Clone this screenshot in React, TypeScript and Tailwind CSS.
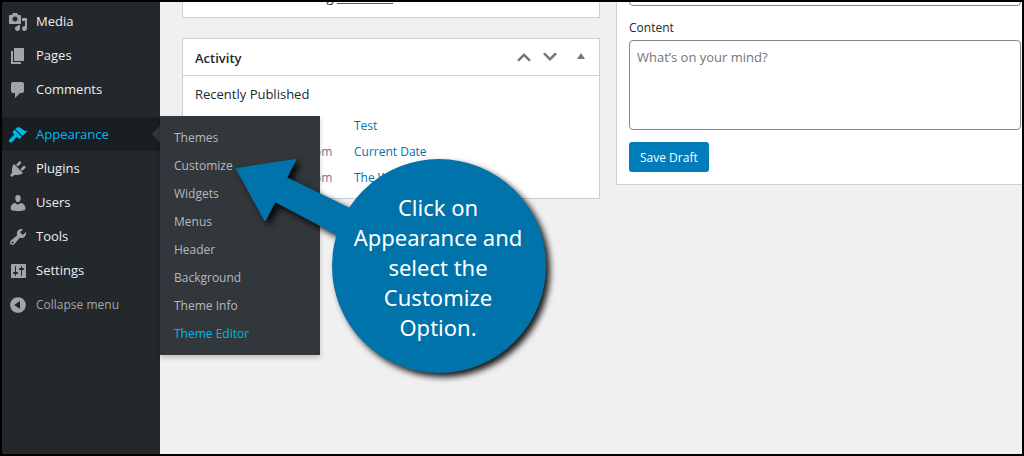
// WordPress dashboard with the Appearance flyout open and a tutorial callout

import { useState } from 'react';

interface MenuItem {
  label: string;
  icon: string;
  submenu?: string[];
}

const icons = {
  media: 'M13 11V4c0-.55-.45-1-1-1h-1.67L9 1H5L3.67 3H2c-.55 0-1 .45-1 1v7c0 .55.45 1 1 1h10c.55 0 1-.45 1-1zM7 4.5c1.38 0 2.5 1.12 2.5 2.5S8.38 9.5 7 9.5 4.5 8.38 4.5 7 5.62 4.5 7 4.5zM14 6h5v10.5c0 1.38-1.12 2.5-2.5 2.5S14 17.88 14 16.5s1.12-2.5 2.5-2.5c.17 0 .34.02.5.05V9h-3V6zm-4 8.05V13h2v3.5c0 1.38-1.12 2.5-2.5 2.5S7 17.88 7 16.5 8.12 14 9.5 14c.17 0 .34.02.5.05z',
  pages: 'M6 15V2h10v13H6zm-1 1h8v2H3V5h2v11z',
  comments: 'M5 2h9c1.1 0 2 .9 2 2v7c0 1.1-.9 2-2 2h-2l-5 5v-5H5c-1.1 0-2-.9-2-2V4c0-1.1.9-2 2-2z',
  appearance: 'M14.48 11.06L7.41 3.99l1.5-1.5c.5-.56 2.3-.47 3.51.32 1.21.8 1.43 1.28 2.91 2.1 1.18.64 2.45 1.26 4.45.85zm-.71.71L6.7 4.7 4.93 6.47c-.39.39-.39 1.02 0 1.41l1.06 1.06c.39.39.39 1.03 0 1.42-.6.6-1.43 1.11-2.21 1.69-.35.26-.7.53-1.01.84C1.43 14.23.4 16.08 1.4 17.07c.99 1 2.84-.03 4.18-1.36.31-.31.58-.66.85-1.02.57-.78 1.08-1.61 1.69-2.21.39-.39 1.02-.39 1.41 0l1.06 1.06c.39.39 1.02.39 1.41 0z',
  plugins: 'M13.11 4.36L9.87 7.6 8 5.73l3.24-3.24c.35-.34 1.05-.2 1.56.32.52.51.66 1.21.31 1.55zm-8 1.77l.91-1.12 9.01 9.01-1.19.84c-.71.71-2.63 1.16-3.82 1.16H6.14L4.9 17.26c-.59.59-1.54.59-2.12 0-.59-.58-.59-1.53 0-2.12l1.24-1.24v-3.88c0-1.13.4-3.19 1.09-3.89zm7.26 3.97l3.24-3.24c.34-.35 1.04-.21 1.55.31.52.51.66 1.21.31 1.55l-3.24 3.25z',
  users: 'M10 9.25c-2.27 0-2.73-3.44-2.73-3.44C7 4.02 7.82 2 9.97 2c2.16 0 2.98 2.02 2.71 3.81 0 0-.41 3.44-2.68 3.44zm0 2.57L12.72 10c2.39 0 4.52 2.33 4.52 4.53v2.49s-3.65 1.13-7.24 1.13c-3.65 0-7.24-1.13-7.24-1.13v-2.49c0-2.25 1.94-4.48 4.47-4.48z',
  tools: 'M16.68 9.77c-1.34 1.34-3.3 1.67-4.95.99l-5.41 6.52c-.99.99-2.59.99-3.58 0s-.99-2.59 0-3.57l6.52-5.42c-.68-1.65-.35-3.61.99-4.95 1.28-1.28 3.12-1.62 4.72-1.06l-2.89 2.89 2.82 2.82 2.86-2.87c.53 1.58.18 3.39-1.08 4.65zM3.81 16.21c.4.39 1.04.39 1.43 0 .4-.4.4-1.04 0-1.43-.39-.4-1.03-.4-1.43 0-.39.39-.39 1.03 0 1.43z',
  settings: 'M18 16V4c0-.55-.45-1-1-1H4c-.55 0-1 .45-1 1v12c0 .55.45 1 1 1h13c.55 0 1-.45 1-1zM8 11h1c.55 0 1 .45 1 1s-.45 1-1 1H8v1.5c0 .28-.22.5-.5.5s-.5-.22-.5-.5V13H6c-.55 0-1-.45-1-1s.45-1 1-1h1V5.5c0-.28.22-.5.5-.5s.5.22.5.5V11zm5-2h-1c-.55 0-1-.45-1-1s.45-1 1-1h1V5.5c0-.28.22-.5.5-.5s.5.22.5.5V7h1c.55 0 1 .45 1 1s-.45 1-1 1h-1v5.5c0 .28-.22.5-.5.5s-.5-.22-.5-.5V9z',
  collapse: 'M10 2.16c4.33 0 7.84 3.51 7.84 7.84s-3.51 7.84-7.84 7.84S2.16 14.33 2.16 10 5.67 2.16 10 2.16zm2 11.72V6.12L6.18 9.97z',
  up: 'M15 14.5l-5-5-5 5-2-1.5 7-7 7 7z',
  down: 'M5 5.5l5 5 5-5 2 1.5-7 7-7-7z',
  toggle: 'M14 12l-4-6-4 6z',
};

const contentMenu: MenuItem[] = [
  { label: 'Media', icon: icons.media },
  { label: 'Pages', icon: icons.pages },
  { label: 'Comments', icon: icons.comments },
];

const siteMenu: MenuItem[] = [
  {
    label: 'Appearance',
    icon: icons.appearance,
    submenu: ['Themes', 'Customize', 'Widgets', 'Menus', 'Header', 'Background', 'Theme Info', 'Theme Editor'],
  },
  { label: 'Plugins', icon: icons.plugins },
  { label: 'Users', icon: icons.users },
  { label: 'Tools', icon: icons.tools },
  { label: 'Settings', icon: icons.settings },
];

const posts = [
  { date: 'May 2nd, 6:10 pm', title: 'Test' },
  { date: 'Apr 27th 2020, 12:40 pm', title: 'Current Date' },
  { date: 'Apr 20th 2020, 11:02 pm', title: 'The Waterfall' },
];

function Icon({ path }: { path: string }) {
  return (
    <svg viewBox="0 0 20 20" className="size-5 shrink-0" fill="currentColor" fillRule="evenodd" aria-hidden="true">
      <path d={path} />
    </svg>
  );
}

function MenuRow({ item }: { item: MenuItem }) {
  const open = Boolean(item.submenu);

  return (
    <li className="relative">
      <a
        href="#"
        className={`flex h-[34px] items-center gap-2 pt-0.5 pl-1.5 text-[13px] ${open ? 'bg-[#191e23] text-[#00b9eb]' : 'text-[#eeeeee]'}`}
      >
        <span className={open ? 'text-[#00b9eb]' : 'text-[#a0a5aa]'}>
          <Icon path={item.icon} />
        </span>
        {item.label}
      </a>
      {item.submenu && (
        <>
          <span className="absolute top-1/2 right-0 -translate-y-1/2 border-8 border-l-0 border-transparent border-r-[#32373c]" />
          <ul className="absolute -top-px left-full z-10 w-40 bg-[#32373c] pt-2 pb-[7px] shadow-[0_3px_5px_rgba(0,0,0,0.2)]">
            {item.submenu.map((label) => (
              <li key={label}>
                <a
                  href="#"
                  className={`block px-3.5 text-xs leading-7 ${label === 'Theme Editor' ? 'text-[#00b9eb]' : 'text-[#b4b9be]'}`}
                >
                  {label}
                </a>
              </li>
            ))}
          </ul>
        </>
      )}
    </li>
  );
}

function Callout() {
  return (
    <div className="pointer-events-none absolute top-[152px] left-[226px] z-20 h-[232px] w-[332px]">
      <svg viewBox="0 0 332 232" className="absolute inset-0 drop-shadow-[4px_4px_3px_rgba(0,0,0,0.9)]" aria-hidden="true">
        <g fill="#0073aa" stroke="#0073aa" strokeWidth="2" strokeLinejoin="round">
          <path d="M9 15 67 6 58 24 134 61 121 86 47 47 37 66z" />
          <circle cx="211" cy="112" r="106" />
        </g>
      </svg>
      <p className="absolute top-[38px] left-[110px] w-[200px] text-center font-['Noto_Sans',sans-serif] text-[22px] leading-[30px] text-white">
        Click on
        <br />
        Appearance and
        <br />
        select the
        <br />
        Customize
        <br />
        Option.
      </p>
    </div>
  );
}

export default function App() {
  const [content, setContent] = useState('');

  return (
    <div className="relative flex min-h-screen overflow-hidden border-2 border-black bg-[#f0f0f0] font-['Open_Sans','Noto_Sans',sans-serif] text-[13px] text-[#23282d]">
      <nav className="w-[158px] shrink-0 bg-[#23282d] pt-0.5">
        <ul>
          {contentMenu.map((item) => (
            <MenuRow key={item.label} item={item} />
          ))}
        </ul>
        <ul className="mt-[11px]">
          {siteMenu.map((item) => (
            <MenuRow key={item.label} item={item} />
          ))}
        </ul>
        <button type="button" className="flex h-[34px] w-full items-center gap-2 pt-0.5 pl-1.5 text-xs text-[#a0a5aa]">
          <Icon path={icons.collapse} />
          Collapse menu
        </button>
      </nav>

      <main className="-mr-3 ml-[22px] grid flex-1 grid-cols-2 items-start gap-4">
        <div className="-mt-5 flex flex-col gap-5">
          <section className="h-9 border border-[#ccd0d4] bg-white px-3">
            <p className="leading-7">
              WordPress 5.4 running{' '}
              <a href="#" className="text-[#0073aa] underline">Neve Lite</a>
            </p>
          </section>

          <section className="border border-[#ccd0d4] bg-white">
            <header className="box-content flex h-9 items-center border-b border-[#ccd0d4] pr-2 pl-3">
              <h2 className="flex-1 pt-1 text-[13px] font-semibold">Activity</h2>
              <div className="flex text-[#72777c]">
                <button type="button" aria-label="Move up" className="px-[3px]">
                  <Icon path={icons.up} />
                </button>
                <button type="button" aria-label="Move down" className="px-[3px]">
                  <Icon path={icons.down} />
                </button>
                <button type="button" aria-label="Toggle panel" className="pl-2">
                  <Icon path={icons.toggle} />
                </button>
              </div>
            </header>
            <div className="px-3 pt-2 pb-[7px]">
              <h3 className="leading-5">Recently Published</h3>
              <ul className="mt-[9px] text-xs leading-[26px]">
                {posts.map((post) => (
                  <li key={post.title} className="flex">
                    <span className="w-[159px] text-[#72777c]">{post.date}</span>
                    <a href="#" className="text-[#0073aa]">{post.title}</a>
                  </li>
                ))}
              </ul>
            </div>
          </section>
        </div>

        <section className="-mt-7 border border-[#ccd0d4] bg-white px-3 pb-3">
          <form className="flex flex-col items-start" onSubmit={(e) => e.preventDefault()}>
            <input aria-label="Title" className="h-[31px] w-full rounded border border-[#7e8993] px-2" />
            <label htmlFor="content" className="mt-[13px] mb-[3px] text-xs leading-[18px]">
              Content
            </label>
            <textarea
              id="content"
              value={content}
              onChange={(e) => setContent(e.target.value)}
              placeholder="What’s on your mind?"
              className="h-[90px] w-full resize-none rounded border border-[#7e8993] px-[7px] py-1.5 text-[13px] leading-5 placeholder:text-[#757575]"
            />
            <button type="submit" className="mt-3 h-[30px] rounded-[3px] bg-[#007cba] px-[11px] pt-0.5 text-xs text-white">
              Save Draft
            </button>
          </form>
        </section>
      </main>

      <Callout />
    </div>
  );
}
